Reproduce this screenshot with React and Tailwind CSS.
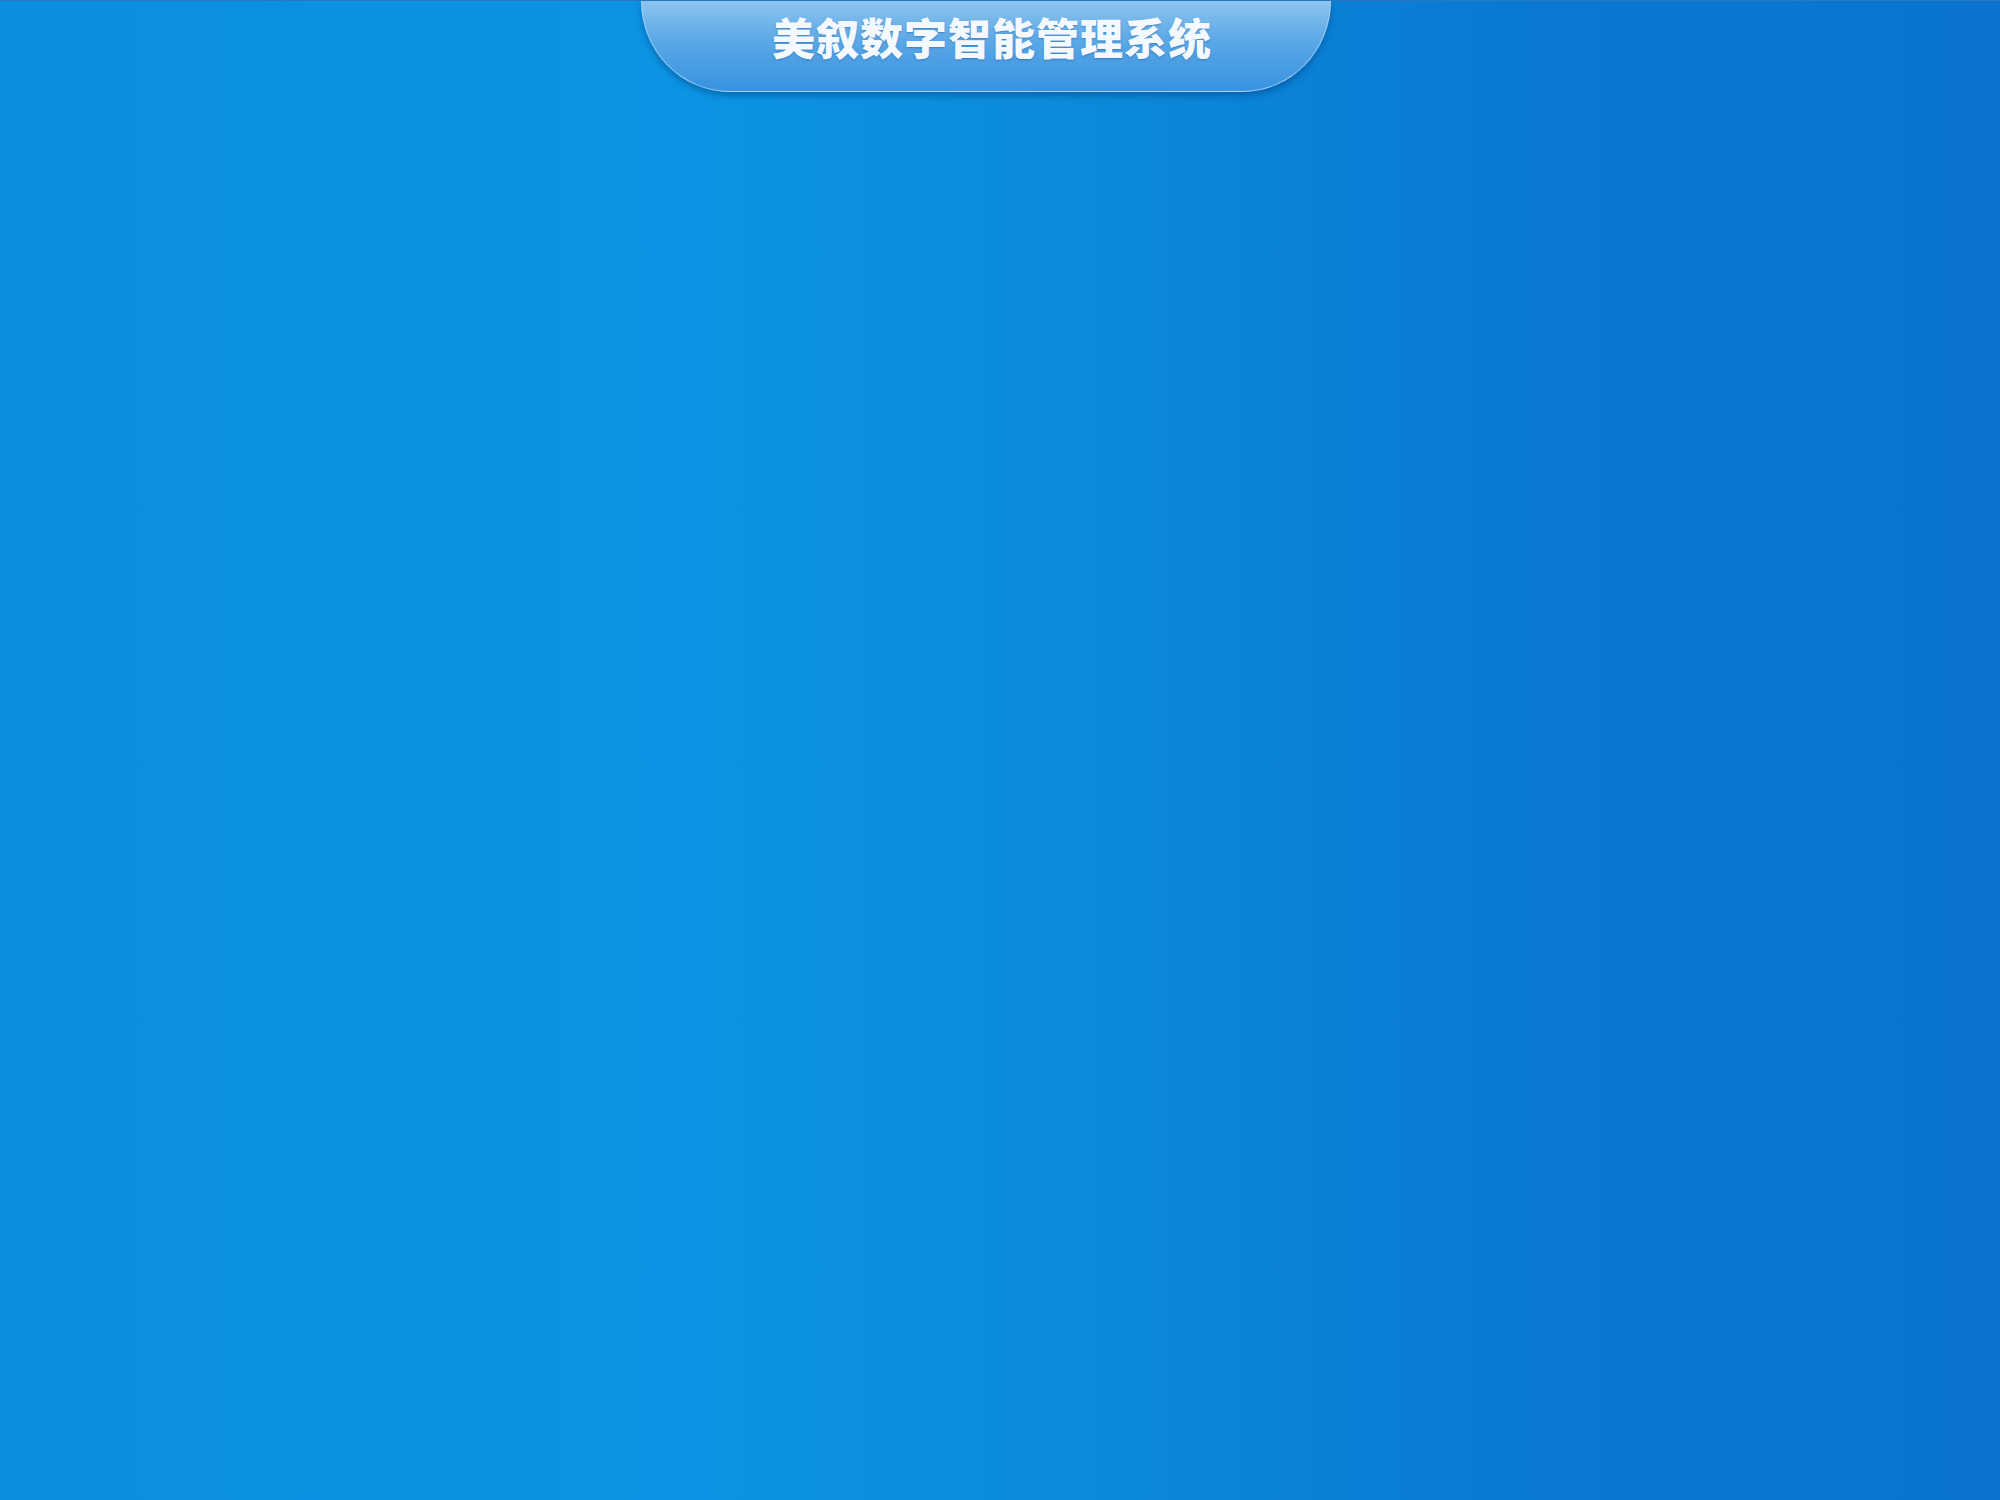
import React from 'react';

const App = () => {
    return (
        <div className="w-[2000px] h-[1500px] flex flex-col items-center border-t border-[#2a78c4] bg-[linear-gradient(90deg,#0b8fdf_0%,#0b94e3_35%,#0b8ada_55%,#0a79d2_75%,#0a74cf_100%)]">
            <div className="mr-[28px] w-[690px] h-[91px] flex items-center justify-center rounded-bl-[90px_92px] rounded-br-[90px_92px] border border-t-0 border-[#b9dcf6]/70 bg-[linear-gradient(180deg,#8cc4ee_0%,#5aa8e6_45%,#3892e0_100%)] shadow-[0_4px_6px_rgba(0,40,100,0.35)]">
                <h1
                    className="text-[43px] font-black text-[#f4f9ff] tracking-[1px] leading-none pl-[12px] pb-[20px] [text-shadow:0_1px_2px_rgba(20,80,160,0.45)]"
                    style={{ fontFamily: '"Noto Sans CJK SC", "Noto Sans", sans-serif' }}
                >
                    美叙数字智能管理系统
                </h1>
            </div>
        </div>
    );
};

export default App;
